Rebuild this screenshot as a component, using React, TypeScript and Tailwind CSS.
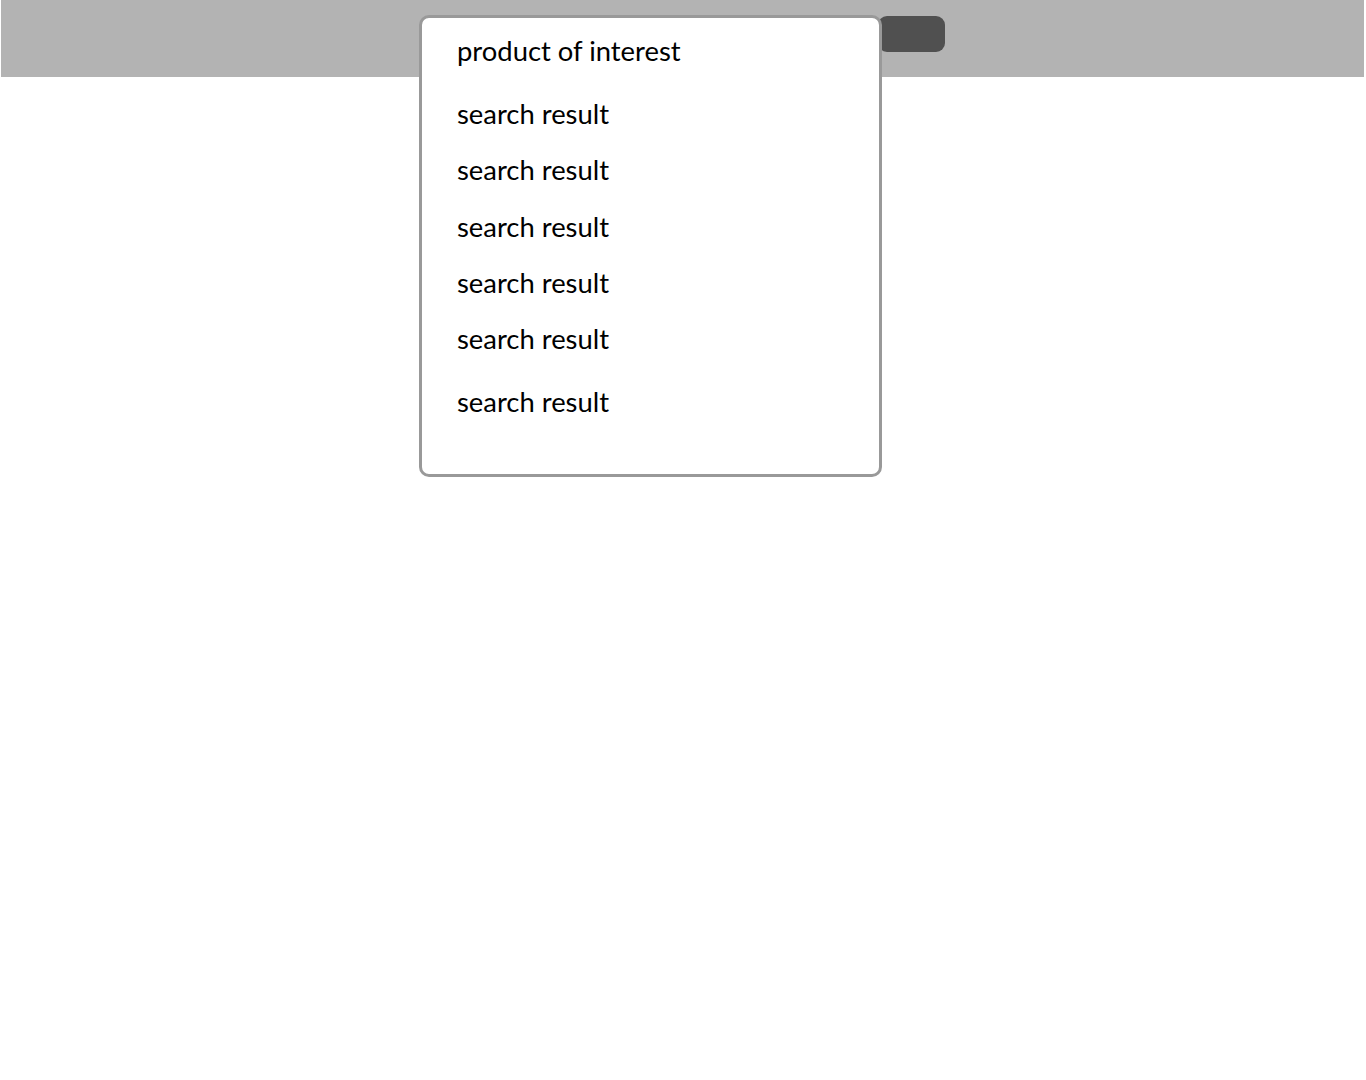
import React from "react";

export default function App() {
  const results = [112, 168, 225, 281, 337, 400];
  return (
    <div className="relative w-[1366px] h-[1080px] bg-white" style={{ fontFamily: "Lato, 'Open Sans', sans-serif" }}>
      <div className="ml-px mr-[2px] h-[77px] bg-[#b3b3b3]" />
      <div className="absolute left-[878px] top-[16px] w-[67px] h-[36px] rounded-[9px] bg-[#505050]" />
      <div className="absolute left-[419px] top-[15px] w-[463px] h-[462px] rounded-[10px] border-[3px] border-[#999999] bg-white">
        <div className="absolute left-[35px] top-[16px] text-[27.4px] leading-[34px] text-black">product of interest</div>
        {results.map((y, i) => (
          <div key={i} className="absolute left-[35px] text-[27.4px] leading-[34px] text-black" style={{ top: y - 15 - 18 }}>
            search result
          </div>
        ))}
      </div>
    </div>
  );
}
